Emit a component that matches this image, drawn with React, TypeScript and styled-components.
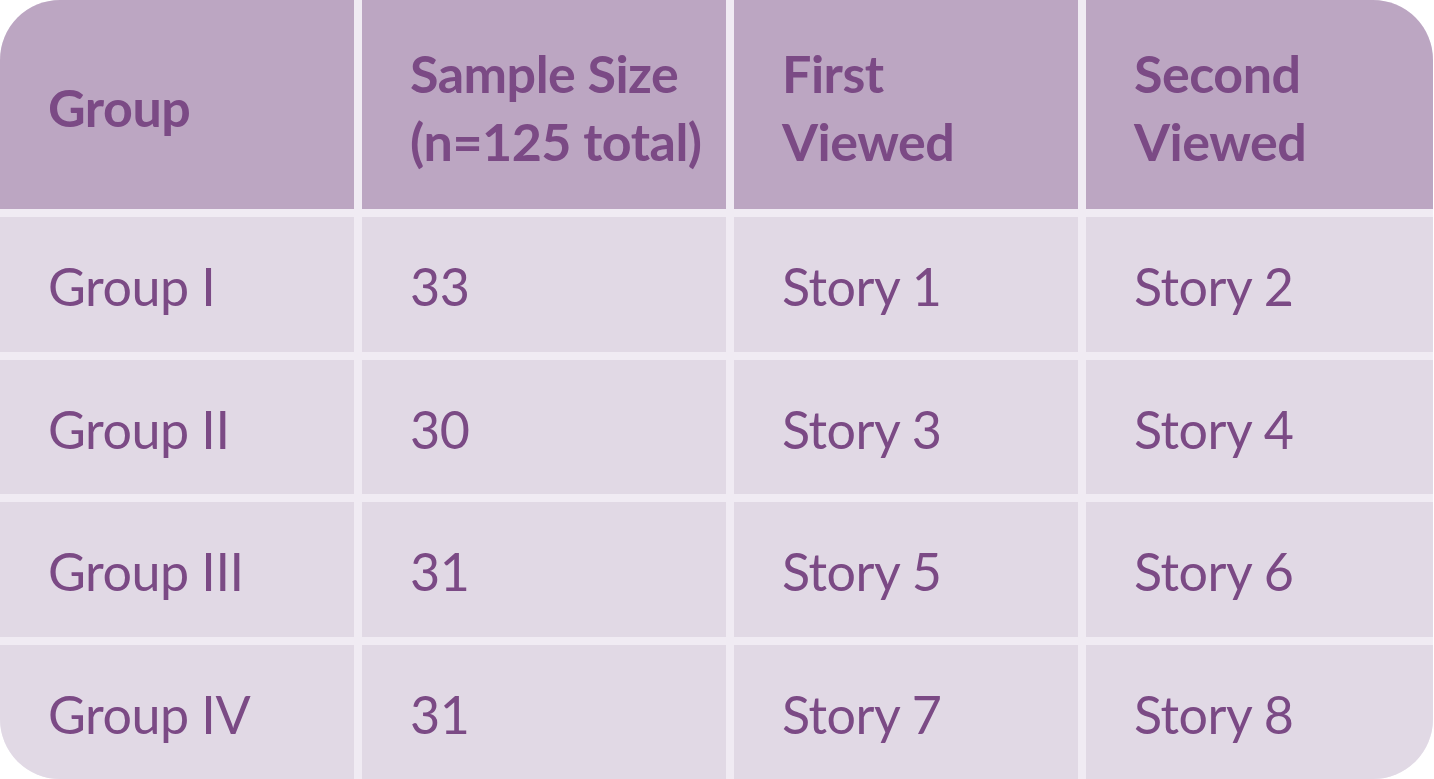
import styled, { createGlobalStyle } from 'styled-components'

const GlobalStyle = createGlobalStyle`
  html, body {
    margin: 0;
    padding: 0;
    background: #ffffff;
  }
`

const Table = styled.div`
  width: 1433px;
  height: 779px;
  display: grid;
  grid-template-columns: 354px 364px 344px 347px;
  grid-template-rows: 209px repeat(4, 1fr);
  gap: 8px;
  background: #f0ebf3;
  border-radius: 60px;
  overflow: hidden;
  font-family: Lato, 'Open Sans', sans-serif;
  color: #7b4a85;
`

const Cell = styled.div<{ $head?: boolean }>`
  display: flex;
  align-items: center;
  padding-left: 48px;
  padding-top: ${(p) => (p.$head ? '5px' : '4px')};
  background: ${(p) => (p.$head ? '#bca6c2' : '#e1d9e5')};
  font-size: 52px;
  letter-spacing: -0.5px;
  font-weight: ${(p) => (p.$head ? 700 : 400)};
  line-height: 68px;
  white-space: pre-line;
`

const header = ['Group', 'Sample Size\n(n=125 total)', 'First\nViewed', 'Second\nViewed']

const rows = [
  ['Group I', '33', 'Story 1', 'Story 2'],
  ['Group II', '30', 'Story 3', 'Story 4'],
  ['Group III', '31', 'Story 5', 'Story 6'],
  ['Group IV', '31', 'Story 7', 'Story 8']
]

const App = () => {
  return (
    <>
      <GlobalStyle />
      <Table>
        {header.map((h) => (
          <Cell key={h} $head>
            {h}
          </Cell>
        ))}
        {rows.map((r) =>
          r.map((c, i) => <Cell key={r[0] + i}>{c}</Cell>)
        )}
      </Table>
    </>
  )
}

export default App
